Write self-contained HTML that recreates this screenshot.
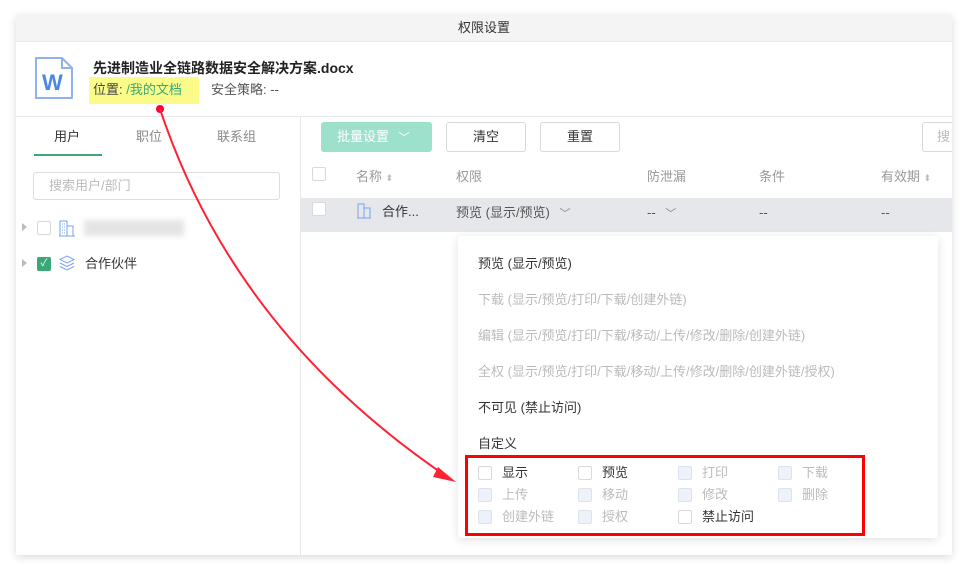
<!DOCTYPE html>
<html><head><meta charset="utf-8"><style>
*{box-sizing:border-box;margin:0;padding:0}
body{width:968px;height:572px;background:#fff;font-family:"Liberation Sans","Noto Sans CJK SC",sans-serif;font-size:13px;color:#333;position:relative;overflow:hidden;line-height:16px}
.a{position:absolute}
.dlg{left:16px;top:15px;width:936px;height:540px;background:#fff;box-shadow:0 2px 8px rgba(0,0,0,.15)}
.cb{position:absolute;width:14px;height:14px;border:1px solid #d9d9d9;border-radius:2px;background:#fff}
.cb.d{background:#edf1f9;border-color:#dde3ee}
.gray{color:#999}
.lt{color:#bbb}
.btn{position:absolute;height:30px;border:1px solid #d9d9d9;border-radius:3px;text-align:center;line-height:28px;background:#fff}
</style></head><body>
<div class="a dlg"></div>
<div class="a" style="left:16px;top:15px;width:936px;height:27px;background:#f4f4f4;border-bottom:1px solid #e8e8e8;text-align:center;line-height:26px;font-size:13px">权限设置</div>
<svg class="a" style="left:34px;top:56px" width="40" height="44" viewBox="0 0 40 44"><path d="M2 2H28L38 12V42H2Z" fill="#fff" stroke="#8fb2ef" stroke-width="2" stroke-linejoin="round"/><path d="M28 2V12H38" fill="none" stroke="#8fb2ef" stroke-width="2"/><text x="8" y="34" font-family="Liberation Sans" font-size="22" font-weight="bold" fill="#4a86e8">W</text></svg>
<div class="a" style="left:93px;top:60px;font-weight:bold;font-size:14px;color:#222">先进制造业全链路数据安全解决方案.docx</div>
<div class="a" style="left:89px;top:77px;width:110px;height:27px;background:#fbfb8a"></div>
<div class="a" style="left:93px;top:82px;color:#444">位置: <span style="color:#3aa776">/我的文档</span></div>
<div class="a" style="left:211px;top:82px;color:#555">安全策略: --</div>
<div class="a" style="left:16px;top:116px;width:936px;border-top:1px solid #e8e8e8"></div>
<div class="a" style="left:300px;top:116px;height:439px;border-left:1px solid #e8e8e8"></div>
<div class="a" style="left:54px;top:129px;color:#333">用户</div>
<div class="a" style="left:136px;top:129px;color:#888">职位</div>
<div class="a" style="left:217px;top:129px;color:#888">联系组</div>
<div class="a" style="left:34px;top:154px;width:68px;height:2px;background:#3aa776"></div>
<div class="a" style="left:33px;top:172px;width:247px;height:28px;border:1px solid #ddd;border-radius:3px;padding-left:15px;line-height:26px;color:#bbb">搜索用户/部门</div>
<div class="a" style="left:22px;top:223px;border-left:5px solid #bbb;border-top:4px solid transparent;border-bottom:4px solid transparent"></div>
<div class="cb" style="left:37px;top:221px"></div>
<svg class="a" style="left:59px;top:220px" width="16" height="17"><path d="M1 16V1H8V16M8 6H14V16M0 16H16" fill="none" stroke="#7aa3ef"/><path d="M3 4h1M5 4h1M3 7h1M5 7h1M3 10h1M5 10h1M3 13h1M5 13h1" stroke="#7aa3ef"/></svg>
<div class="a" style="left:84px;top:220px;width:100px;height:16px;background:#e4e4e4;filter:blur(3px)"></div>
<div class="a" style="left:22px;top:259px;border-left:5px solid #bbb;border-top:4px solid transparent;border-bottom:4px solid transparent"></div>
<div class="a" style="left:37px;top:257px;width:14px;height:14px;background:#3aa776;border-radius:2px;color:#fff;font-size:10px;text-align:center;line-height:14px">✓</div>
<svg class="a" style="left:59px;top:255px" width="16" height="17"><path d="M8 1L15 4.5L8 8L1 4.5Z M1 8L8 11.5L15 8 M1 11.5L8 15L15 11.5" fill="none" stroke="#7aa3ef"/></svg>
<div class="a" style="left:85px;top:256px">合作伙伴</div>
<div class="a" style="left:321px;top:122px;width:111px;height:30px;background:#9de0cb;border-radius:3px;color:#fff;line-height:30px;padding-left:16px">批量设置 <span style="margin-left:6px;font-size:11px">﹀</span></div>
<div class="btn" style="left:446px;top:122px;width:80px">清空</div>
<div class="btn" style="left:540px;top:122px;width:80px">重置</div>
<div class="a" style="left:900px;top:120px;width:52px;height:36px;overflow:hidden"><div class="btn" style="left:22px;top:2px;width:40px;color:#bbb;text-align:left;padding-left:14px">搜</div></div>
<div class="cb" style="left:312px;top:167px"></div>
<div class="a gray" style="left:356px;top:169px">名称 <span style="font-size:9px;color:#bbb">⬍</span></div>
<div class="a gray" style="left:456px;top:169px">权限</div>
<div class="a gray" style="left:647px;top:169px">防泄漏</div>
<div class="a gray" style="left:759px;top:169px">条件</div>
<div class="a gray" style="left:881px;top:169px">有效期 <span style="font-size:9px;color:#bbb">⬍</span></div>
<div class="a" style="left:301px;top:198px;width:651px;height:34px;background:#e6e7ea"></div>
<div class="cb" style="left:312px;top:202px"></div>
<svg class="a" style="left:357px;top:203px" width="15" height="16"><path d="M1 15V1H7V15M7 5H13V15M0 15H14" fill="none" stroke="#7aa3ef"/></svg>
<div class="a" style="left:382px;top:204px">合作...</div>
<div class="a" style="left:456px;top:205px;color:#555">预览 (显示/预览) <span style="margin-left:6px;font-size:11px;color:#888">﹀</span></div>
<div class="a" style="left:647px;top:205px;color:#555">-- <span style="margin-left:6px;font-size:11px;color:#888">﹀</span></div>
<div class="a" style="left:759px;top:205px;color:#555">--</div>
<div class="a" style="left:881px;top:205px;color:#555">--</div>
<div class="a" style="left:458px;top:236px;width:480px;height:302px;background:#fff;border-radius:3px;box-shadow:0 2px 10px rgba(0,0,0,.12)"></div>
<div class="a" style="left:478px;top:256px">预览 (显示/预览)</div>
<div class="a lt" style="left:478px;top:292px">下载 (显示/预览/打印/下载/创建外链)</div>
<div class="a lt" style="left:478px;top:328px">编辑 (显示/预览/打印/下载/移动/上传/修改/删除/创建外链)</div>
<div class="a lt" style="left:478px;top:364px">全权 (显示/预览/打印/下载/移动/上传/修改/删除/创建外链/授权)</div>
<div class="a" style="left:478px;top:400px">不可见 (禁止访问)</div>
<div class="a" style="left:478px;top:436px">自定义</div>
<div class="cb" style="left:478px;top:466px"></div><div class="a" style="left:502px;top:465px">显示</div>
<div class="cb" style="left:578px;top:466px"></div><div class="a" style="left:602px;top:465px">预览</div>
<div class="cb d" style="left:678px;top:466px"></div><div class="a lt" style="left:702px;top:465px">打印</div>
<div class="cb d" style="left:778px;top:466px"></div><div class="a lt" style="left:802px;top:465px">下载</div>
<div class="cb d" style="left:478px;top:488px"></div><div class="a lt" style="left:502px;top:487px">上传</div>
<div class="cb d" style="left:578px;top:488px"></div><div class="a lt" style="left:602px;top:487px">移动</div>
<div class="cb d" style="left:678px;top:488px"></div><div class="a lt" style="left:702px;top:487px">修改</div>
<div class="cb d" style="left:778px;top:488px"></div><div class="a lt" style="left:802px;top:487px">删除</div>
<div class="cb d" style="left:478px;top:510px"></div><div class="a lt" style="left:502px;top:509px">创建外链</div>
<div class="cb d" style="left:578px;top:510px"></div><div class="a lt" style="left:602px;top:509px">授权</div>
<div class="cb" style="left:678px;top:510px"></div><div class="a" style="left:702px;top:509px">禁止访问</div>
<div class="a" style="left:465px;top:455px;width:400px;height:81px;border:3px solid #f00"></div>
<svg class="a" style="left:0;top:0" width="968" height="572"><circle cx="160" cy="109" r="4" fill="#f03"/><path d="M160 109 Q235 335 452 480" fill="none" stroke="#f23" stroke-width="2"/><path d="M456 482 L438 467 L433 477 Z" fill="#f23"/></svg>
</body></html>
